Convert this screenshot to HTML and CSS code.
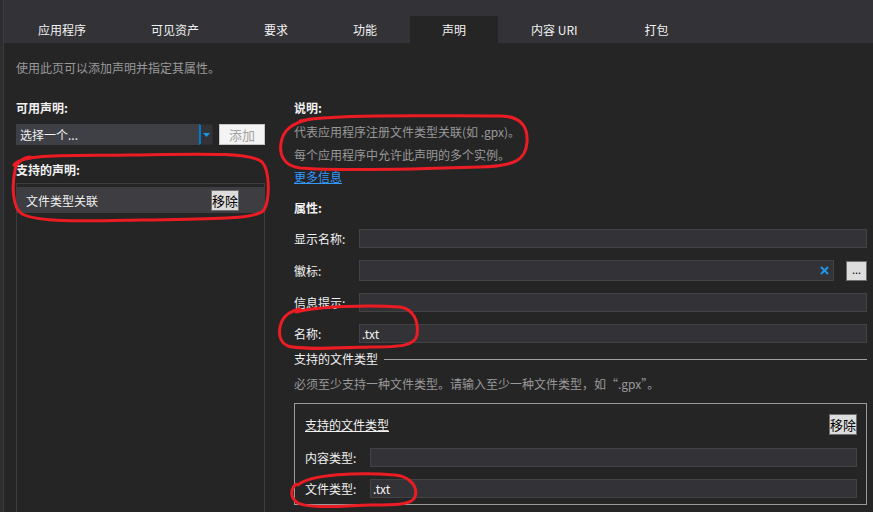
FILE: index.html
```html
<!DOCTYPE html>
<html>
<head>
<meta charset="utf-8">
<link rel="stylesheet" href="styles.css">
</head>
<body>
<div class="app">
  <div class="inner">
    <div class="tabbar">
      <div class="tab">应用程序</div>
      <div class="tab">可见资产</div>
      <div class="tab">要求</div>
      <div class="tab">功能</div>
      <div class="tab active">声明</div>
      <div class="tab uri">内容 URI</div>
      <div class="tab">打包</div>
    </div>
    <div class="page">
      <p class="intro">使用此页可以添加声明并指定其属性。</p>
      <div class="columns">
        <div class="left">
          <div class="label-bold">可用声明:</div>
          <div class="add-row">
            <div class="combo">
              <span class="combo-text">选择一个...</span>
              <span class="combo-btn"><svg width="7" height="4" viewBox="0 0 7 4"><path d="M0 0h7L3.5 4z" fill="#1c97ea"/></svg></span>
            </div>
            <div class="btn disabled add-btn">添加</div>
          </div>
          <div class="label-bold second">支持的声明:</div>
          <div class="listbox">
            <div class="list-item">
              <span>文件类型关联</span>
              <div class="btn remove">移除</div>
            </div>
          </div>
        </div>
        <div class="right">
          <div class="label-bold">说明:</div>
          <div class="desc">
            <div>代表应用程序注册文件类型关联(如 .gpx)。</div>
            <div>每个应用程序中允许此声明的多个实例。</div>
          </div>
          <a class="link">更多信息</a>
          <div class="label-bold props">属性:</div>
          <div class="prop-row">
            <span class="prop-label">显示名称:</span>
            <div class="field"></div>
          </div>
          <div class="prop-row tall">
            <span class="prop-label">徽标:</span>
            <div class="field logo-field"><svg class="clear" width="9" height="9" viewBox="0 0 9 9"><path d="M1 1L8 8M8 1L1 8" stroke="#1c97ea" stroke-width="2"/></svg></div>
            <div class="btn browse">...</div>
          </div>
          <div class="prop-row">
            <span class="prop-label">信息提示:</span>
            <div class="field"></div>
          </div>
          <div class="prop-row">
            <span class="prop-label">名称:</span>
            <div class="field">.txt</div>
          </div>
          <div class="section-head"><span>支持的文件类型</span><span class="rule"></span></div>
          <div class="note">必须至少支持一种文件类型。请输入至少一种文件类型，如“.gpx”。</div>
          <div class="groupbox">
            <div class="group-head">
              <span class="group-title">支持的文件类型</span>
              <div class="btn remove">移除</div>
            </div>
            <div class="prop-row">
              <span class="prop-label">内容类型:</span>
              <div class="field"></div>
            </div>
            <div class="prop-row">
              <span class="prop-label">文件类型:</span>
              <div class="field">.txt</div>
            </div>
          </div>
        </div>
      </div>
    </div>
  </div>
  <svg class="marks" width="873" height="512" viewBox="0 0 873 512">
    <g fill="none" stroke="#ec1c24" stroke-width="3" stroke-linecap="round" stroke-linejoin="round">
      <path d="M14 165 C20 154 60 156 130 155 C200 154 250 152 262 162 C270 170 270 200 264 210 C256 220 200 219 140 220 C90 221 40 223 22 214 C12 208 12 185 15 170 C16 163 22 158 30 157"/>
      <path d="M300 121 C330 114 420 116 500 116 C522 116 528 128 527 142 C526 160 515 166 480 167 C420 169 340 171 300 168 C284 166 279 155 281 143 C283 130 292 123 310 119"/>
      <path d="M296 312 C320 306 370 305 400 307 C414 309 419 322 417 335 C415 346 400 347 370 347 C340 348 300 350 288 346 C278 342 278 330 282 321 C285 315 290 311 300 309"/>
      <path d="M298 485 C310 474 360 472 395 475 C412 477 418 488 415 497 C412 505 395 505 370 505 C340 506 310 509 298 503 C290 498 290 490 296 484"/>
    </g>
  </svg>
</div>
</body>
</html>
```

FILE: styles.css
```css
* { box-sizing: border-box; }
html, body {
  margin: 0;
  padding: 0;
  background: #252526;
  font-family: "Noto Sans CJK SC", "Noto Sans", sans-serif;
  font-size: 12px;
  color: #f1f1f1;
  overflow: hidden;
}
.app {
  position: relative;
  width: 873px;
  height: 512px;
  border-left: 3px solid #2d2d30;
  overflow: hidden;
}
.inner {
  height: 100%;
  border-left: 1px solid #3c3c41;
  display: flex;
  flex-direction: column;
}
.tabbar {
  background: #333337;
  height: 43px;
  padding: 16px 0 0 2px;
  display: flex;
  flex-shrink: 0;
}
.tab {
  height: 27px;
  line-height: 27px;
  padding: 0 32px;
  margin-right: 1px;
  color: #f1f1f1;
  white-space: nowrap;
}
.tab.uri { padding-right: 34px; }
.tab.active { background: #252526; }
.page {
  flex: 1;
  display: flex;
  flex-direction: column;
  padding: 17px 6px 0 12px;
  min-height: 0;
}
.intro {
  margin: 0;
  line-height: 16px;
  color: #999999;
}
.columns {
  flex: 1;
  display: flex;
  gap: 29px;
  margin-top: 24px;
  min-height: 0;
}
.left {
  width: 249px;
  display: flex;
  flex-direction: column;
}
.right { flex: 1; }
.label-bold {
  font-weight: bold;
  line-height: 16px;
  color: #f1f1f1;
}
.add-row {
  display: flex;
  margin-top: 8px;
  height: 21px;
}
.combo {
  width: 198px;
  height: 21px;
  background: #3f3f46;
  display: flex;
  align-items: center;
}
.combo-text {
  flex: 1;
  padding-left: 4px;
  color: #f1f1f1;
}
.combo-btn {
  width: 14px;
  height: 21px;
  border-left: 2px solid #007acc;
  border-right: 1px solid #2d2d30;
  border-top: 1px solid #2d2d30;
  border-bottom: 1px solid #2d2d30;
  background: #333337;
  display: flex;
  align-items: center;
  justify-content: center;
}
.btn {
  display: flex;
  align-items: center;
  justify-content: center;
  background: #dddddd;
  border: 1px solid #707070;
  color: #000;
  line-height: 1;
}
.add-btn {
  margin-left: 6px;
  width: 46px;
  height: 21px;
}
.btn.disabled {
  background: #f4f4f4;
  border-color: #c6c6c6;
  color: #a2a2a2;
  font-size: 13px;
}
.second { margin-top: 17px; }
.listbox {
  flex: 1;
  margin-top: 5px;
  border: 1px solid #3c3c41;
  border-bottom: none;
  padding-top: 3px;
}
.list-item {
  height: 26px;
  background: #3e3e42;
  display: flex;
  align-items: center;
  justify-content: space-between;
  padding: 0 25px 0 9px;
}
.remove {
  width: 28px;
  height: 21px;
  font-size: 13px;
}
.desc {
  color: #999999;
  line-height: 23px;
  margin-top: 4px;
}
.link {
  display: block;
  color: #3399ff;
  text-decoration: underline;
  line-height: 16px;
  margin-top: 3px;
}
.props { margin-top: 15px; }
.prop-row {
  display: flex;
  align-items: center;
  margin-top: 12px;
}
.props + .prop-row { margin-top: 13px; }
.prop-label {
  width: 65px;
  flex-shrink: 0;
  color: #f1f1f1;
}
.field {
  flex: 1;
  height: 19px;
  line-height: 17px;
  background: #333337;
  border: 1px solid #434346;
  padding-left: 2px;
  color: #f1f1f1;
}
.tall .field { height: 21px; }
.logo-field {
  display: flex;
  justify-content: flex-end;
  align-items: center;
  padding-right: 4px;
}
.browse {
  margin-left: 12px;
  width: 21px;
  height: 20px;
  font-size: 11px;
  align-items: flex-end;
  padding-bottom: 5px;
}
.section-head {
  display: flex;
  align-items: center;
  margin-top: 8px;
  line-height: 16px;
}
.rule {
  flex: 1;
  height: 1px;
  background: #a0a0a0;
  margin-left: 6px;
}
.note {
  color: #999999;
  line-height: 16px;
  margin-top: 9px;
}
.groupbox {
  margin-top: 11px;
  border: 1px solid #9a9a9a;
  padding: 10px 9px 6px 10px;
}
.group-head {
  display: flex;
  align-items: center;
  justify-content: space-between;
  height: 21px;
}
.group-title { text-decoration: underline; }
.groupbox .prop-row:nth-child(2) { margin-top: 13px; }
.marks {
  position: absolute;
  left: -3px;
  top: 0;
  pointer-events: none;
}
```
